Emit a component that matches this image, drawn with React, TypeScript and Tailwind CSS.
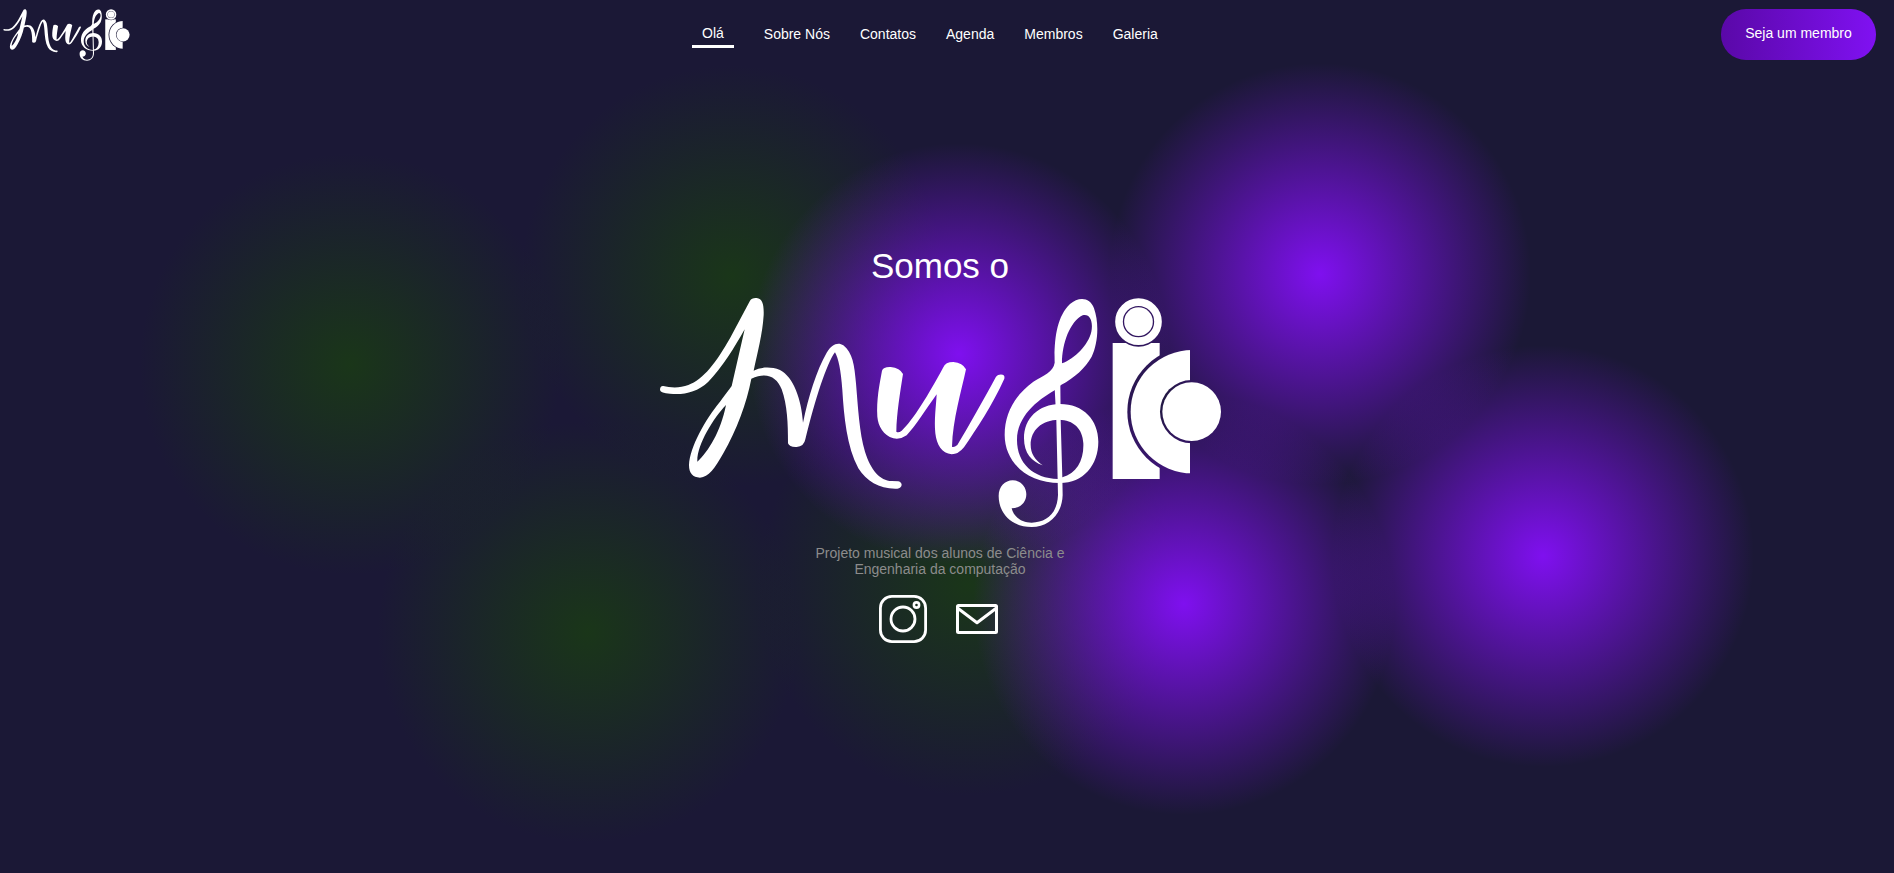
import { useId } from "react";

const links = ["Sobre Nós", "Contatos", "Agenda", "Membros", "Galeria"];

function Logo({ className }: { className: string }) {
  const id = useId();
  return (
    <svg viewBox="659 297 563 231" className={className} fill="white" role="img" aria-label="MusIC">
      <defs>
        <mask id={`${id}stem`} maskUnits="userSpaceOnUse" x="740" y="40" width="360" height="580">
          <rect x="740" y="40" width="360" height="580" fill="white" />
          <circle cx="835.5" cy="125" r="75" fill="black" />
          <circle cx="997" cy="395" r="195" fill="black" />
        </mask>
        <mask id={`${id}arc`} maskUnits="userSpaceOnUse" x="740" y="40" width="360" height="580">
          <rect x="740" y="40" width="250" height="580" fill="white" />
          <circle cx="995" cy="395" r="95" fill="black" />
        </mask>
      </defs>
      <g transform="translate(650 230) scale(0.33333)">
        <path
          fillRule="evenodd"
          d="M40 468C60 473 90 475 115 465C160 450 200 395 240 325L300 212Q305 203 320 204C338 206 342 225 341 255C338 310 322 370 311 422C330 412 360 408 390 420C430 440 455 510 459 578C475 500 500 420 530 368C545 342 565 335 580 346C608 368 613 405 618 460C624 530 628 610 645 665C662 720 690 752 725 753L745 754Q755 757 755 765Q753 775 742 776C690 778 650 755 625 715C590 650 582 560 577 480C573 420 565 385 555 367C530 400 495 510 466 628Q462 650 440 651Q418 652 414 640C414 580 412 525 395 478C380 440 350 425 304 446C290 520 260 600 220 670C195 715 175 742 150 743C128 742 117 730 117 705C120 650 165 570 210 515C225 495 235 482 245 468L284 298C255 350 215 415 175 455C140 488 100 495 60 491Q32 490 30 480Q30 467 40 468ZM228 525C190 565 140 645 142 695C175 665 212 605 228 525Z"
        />
      </g>
      <g transform="translate(860 280) scale(0.33333)">
        <path d="M66 272Q70 260 92 261Q120 264 129 282C120 340 110 400 109 455Q115 460 125 452C160 420 205 345 250 262Q256 246 280 246Q308 248 318 268C305 330 278 420 276 500Q282 503 292 495C325 440 370 360 408 290Q414 282 428 284Q435 286 433 296C395 380 350 445 312 502Q295 523 275 523C245 520 230 495 226 460C222 420 228 380 230 343C200 385 165 440 140 466Q120 480 100 475C70 465 55 440 52 410C49 360 58 315 66 272Z" />
        <path
          fillRule="evenodd"
          d="M584 248C582 180 590 110 630 72C655 50 690 50 702 85C718 130 714 190 695 230C675 265 645 292 603 315L584 331C530 362 471 410 471 480C471 550 520 595 594 597L607 592C650 580 672 540 670 490C668 445 640 420 597 419C545 420 512 450 512 495C512 520 525 540 548 556C515 545 492 520 492 475C492 415 535 373 600 372C670 372 715 420 715 485C715 555 670 609 600 609C500 609 434 545 434 465C434 400 465 345 520 305C550 286 580 276 584 248ZM606 250C606 190 630 125 668 106C690 100 700 125 694 155C685 195 645 235 606 250Z"
        />
        <path d="M584 325L601 312L602 420L607 592L608 645C606 705 565 741 515 741C455 741 416 700 416 648C416 620 435 601 458 601C482 601 499 620 499 643C499 668 480 685 455 685C460 710 485 728 515 728C560 727 592 700 594 645L589 420Z" />
        <circle cx="835.5" cy="125" r="58.5" fill="none" stroke="white" strokeWidth="23" />
        <circle cx="835.5" cy="125" r="43" />
        <rect x="758" y="189" width="141" height="408" mask={`url(#${id}stem)`} />
        <circle cx="997" cy="395" r="185" mask={`url(#${id}arc)`} />
        <circle cx="995" cy="395" r="88" />
      </g>
    </svg>
  );
}

function InstagramIcon() {
  return (
    <svg viewBox="0 0 48 48" className="size-12" fill="none" stroke="white">
      <rect x="1.4" y="1.4" width="45.2" height="45.2" rx="11.5" strokeWidth="2.8" />
      <circle cx="24" cy="24" r="12" strokeWidth="2.8" />
      <circle cx="37.5" cy="10" r="2.6" strokeWidth="2.6" />
    </svg>
  );
}

function MailIcon() {
  return (
    <svg viewBox="0 0 42 30" className="h-[30px] w-[42px]" fill="none" stroke="white" strokeLinejoin="round">
      <rect x="1.5" y="1.5" width="39" height="27" rx="1" strokeWidth="3" />
      <path d="M1.5 4L21 18.8L40.5 4" strokeWidth="3" />
    </svg>
  );
}

export default function App() {
  return (
    <div className="h-[873px] w-full overflow-hidden bg-[#1b1836] bg-[radial-gradient(circle_at_959px_354px,#7f10ef,transparent_211px),radial-gradient(circle_at_1320px_274px,#7f10ef,transparent_211px),radial-gradient(circle_at_1543px_556px,#7f10ef,transparent_211px),radial-gradient(circle_at_1184px_604px,#7f10ef,transparent_211px),radial-gradient(circle_at_350px_364px,#1a3619,transparent_211px),radial-gradient(circle_at_732px_276px,#1a3619,transparent_211px),radial-gradient(circle_at_588px_632px,#1a3619,transparent_211px),radial-gradient(circle_at_968px_585px,#1a3619,transparent_211px)] font-['Liberation_Sans',Arial,sans-serif] text-white">
      <header className="grid h-[68px] grid-cols-[692px_1fr_auto] items-center pr-[18px]">
        <div className="pl-[3px]">
          <Logo className="mt-px h-[52px] w-[127px]" />
        </div>
        <nav className="flex items-center gap-[30px] text-[14px] leading-4">
          <a className="border-b-[3px] border-white px-[10px] pt-[5px] pb-1">Olá</a>
          {links.map((label) => (
            <a key={label}>{label}</a>
          ))}
        </nav>
        <button className="mt-px h-[51px] w-[155px] rounded-[25px] bg-linear-to-r from-[#5a08a8] to-[#8011f2] pb-0.5 text-[14px]">
          Seja um membro
        </button>
      </header>

      <main className="flex flex-col items-center pt-[177px] pr-[14px]">
        <h1 className="text-[35px] leading-[42px]">Somos o</h1>
        <Logo className="mt-[10px] ml-px h-[231px] w-[563px]" />
        <p className="mt-[17px] w-[270px] text-center text-[14px] leading-4 text-[#8c8c8c]">
          Projeto musical dos alunos de Ciência e Engenharia da computação
        </p>
        <div className="mt-[18px] mr-[3px] flex items-center gap-[29px]">
          <InstagramIcon />
          <MailIcon />
        </div>
      </main>
    </div>
  );
}
